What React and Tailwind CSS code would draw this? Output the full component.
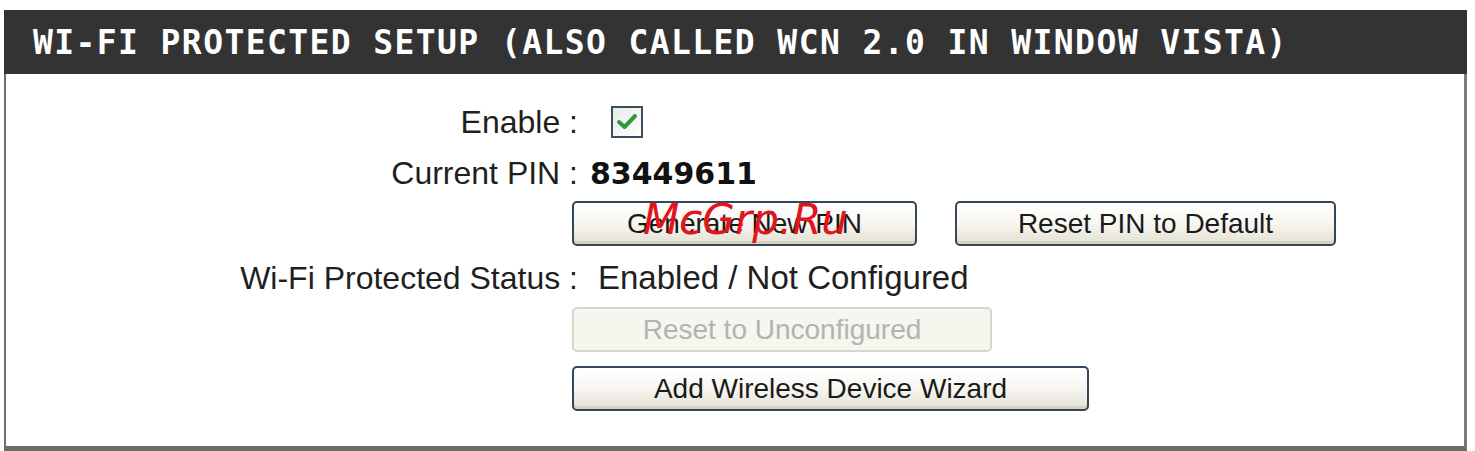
import React from "react";

const labelFont = { fontFamily: '"Liberation Sans", Arial, sans-serif' };

const XpButton = ({ children, width, disabled }) => (
  <button
    disabled={disabled}
    className={
      disabled
        ? "h-[45px] rounded-[5px] border-2 border-[#d8d6cb] bg-[#f6f5ee] text-[28px] text-[#b3b3b3]"
        : "h-[45px] rounded-[5px] border-2 border-[#34475a] bg-gradient-to-b from-white via-[#f7f6f1] to-[#e3e0d3] text-[28px] text-[#1a1a1a] shadow-[inset_0_-3px_0_#d6d1c0]"
    }
    style={{ width, ...labelFont }}
  >
    {children}
  </button>
);

const App = () => {
  return (
    <div className="w-[1475px] h-[451px] bg-white pt-[10px] pl-[4px]" style={labelFont}>
      <div className="w-[1463px]">
        <div className="h-[64px] bg-[#333333] flex items-center pl-[29px]">
          <h2
            className="text-white font-bold text-[33px] tracking-[1.4px] leading-none"
            style={{ fontFamily: '"DejaVu Sans Mono", monospace' }}
          >
            WI-FI PROTECTED SETUP (ALSO CALLED WCN 2.0 IN WINDOW VISTA)
          </h2>
        </div>
        <div className="h-[377px] bg-white border-l-2 border-r-[3px] border-b-[5px] border-l-[#6f6f6f] border-r-[#7a7a7a] border-b-[#6a6a6a] pt-[26px] text-[32px] text-[#1f1f1f]">
          <div className="flex items-center h-[44px]">
            <div className="w-[572px] text-right">Enable :</div>
            <div className="ml-[33px] w-[32px] h-[32px] border-2 border-[#3d4d5c] bg-gradient-to-br from-[#e6ebe8] to-white flex items-center justify-center">
              <svg width="22" height="18" viewBox="0 0 22 18">
                <path d="M3 9 L8.5 14 L19 3" fill="none" stroke="#2f9a38" strokeWidth="4" strokeLinecap="round" strokeLinejoin="round" />
              </svg>
            </div>
          </div>
          <div className="flex items-center h-[58px]">
            <div className="w-[572px] text-right">Current PIN :</div>
            <div
              className="ml-[12px] font-bold text-[30px] text-[#111]"
              style={{ fontFamily: '"DejaVu Sans", sans-serif' }}
            >
              83449611
            </div>
          </div>
          <div className="flex items-center h-[45px] mt-[-1px] pl-[566px] gap-[38px] relative">
            <XpButton width="345px">Generate New PIN</XpButton>
            <XpButton width="381px">Reset PIN to Default</XpButton>
            <span
              className="absolute left-[637px] top-[-2px] text-[42px] italic text-[#e3141c] leading-none pointer-events-none"
              style={{ fontFamily: '"DejaVu Sans", sans-serif' }}
            >
              McGrp.Ru
            </span>
          </div>
          <div className="flex items-center h-[58px] mt-[3px]">
            <div className="w-[572px] text-right">Wi-Fi Protected Status :</div>
            <div className="ml-[20px] text-[33px]">Enabled / Not Configured</div>
          </div>
          <div className="flex pl-[566px]">
            <XpButton width="420px" disabled>Reset to Unconfigured</XpButton>
          </div>
          <div className="flex pl-[566px] mt-[14px]">
            <XpButton width="517px">Add Wireless Device Wizard</XpButton>
          </div>
        </div>
      </div>
    </div>
  );
};

export default App;
